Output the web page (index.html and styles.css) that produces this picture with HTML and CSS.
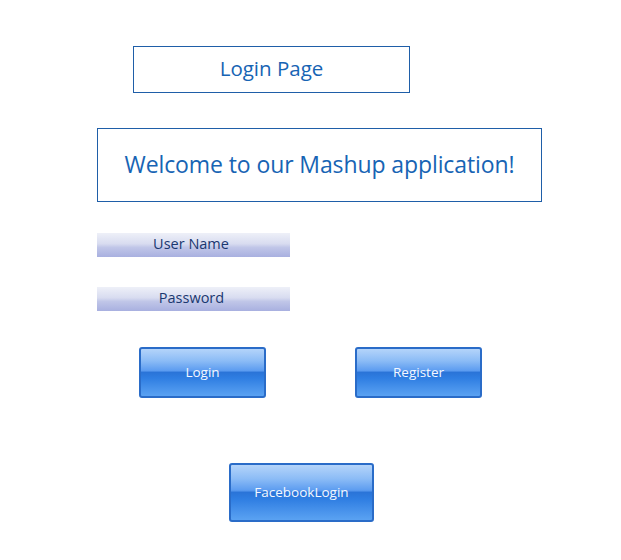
FILE: index.html
```html
<!DOCTYPE html>
<html>
<head>
<meta charset="utf-8">
<link rel="stylesheet" href="styles.css">
</head>
<body>
<div class="page">
  <div class="title-box">Login Page</div>
  <div class="welcome-box">Welcome to our Mashup application!</div>
  <div class="field field-user">User Name</div>
  <div class="field field-pass">Password</div>
  <div class="btn-row">
    <div class="btn btn-login">Login</div>
    <div class="btn btn-register">Register</div>
  </div>
  <div class="btn btn-fb">FacebookLogin</div>
</div>
</body>
</html>
```
FILE: styles.css
```css
html, body {
  margin: 0;
  padding: 0;
  background: #ffffff;
}
.page {
  width: 621px;
  height: 560px;
  padding-top: 46px;
  box-sizing: border-box;
  font-family: "Open Sans", "Noto Sans", sans-serif;
}
.title-box {
  margin-left: 133px;
  width: 277px;
  height: 47px;
  box-sizing: border-box;
  border: 1px solid #1f5ea8;
  padding-bottom: 3px;
  display: flex;
  align-items: center;
  justify-content: center;
  color: #1764b4;
  font-size: 20.5px;
}
.welcome-box {
  margin-left: 97px;
  margin-top: 35px;
  width: 445px;
  height: 74px;
  box-sizing: border-box;
  border: 1px solid #1f5ea8;
  padding-bottom: 3px;
  display: flex;
  align-items: center;
  justify-content: center;
  color: #1764b4;
  font-size: 23px;
  letter-spacing: -0.1px;
}
.field {
  margin-left: 97px;
  width: 193px;
  height: 24px;
  box-sizing: border-box;
  padding-bottom: 3px;
  background: linear-gradient(to bottom, #eef0f8 0%, #d8dcf0 45%, #c0c6e8 60%, #a8b0e0 100%);
  color: #1a3870;
  font-size: 14.5px;
  display: flex;
  align-items: center;
  justify-content: center;
}
.field-user {
  margin-top: 31px;
  padding-right: 5px;
}
.field-pass {
  margin-top: 30px;
  padding-right: 4px;
}
.btn-row {
  margin-top: 36px;
  margin-left: 139px;
  display: flex;
  gap: 89px;
}
.btn {
  box-sizing: border-box;
  border: 2px solid #2a6cc8;
  border-radius: 3px;
  padding-bottom: 2px;
  background: linear-gradient(to bottom, #b4d4fa 0%, #8cbcf6 25%, #5c9cf0 46%, #2a74d8 50%, #2f7ee2 62%, #4a94ec 85%, #5aa2f2 100%);
  color: #f4f8ff;
  font-size: 13.5px;
  display: flex;
  align-items: center;
  justify-content: center;
}
.btn-login,
.btn-register {
  width: 127px;
  height: 51px;
}
.btn-fb {
  margin-left: 229px;
  margin-top: 65px;
  width: 145px;
  height: 59px;
}
```
